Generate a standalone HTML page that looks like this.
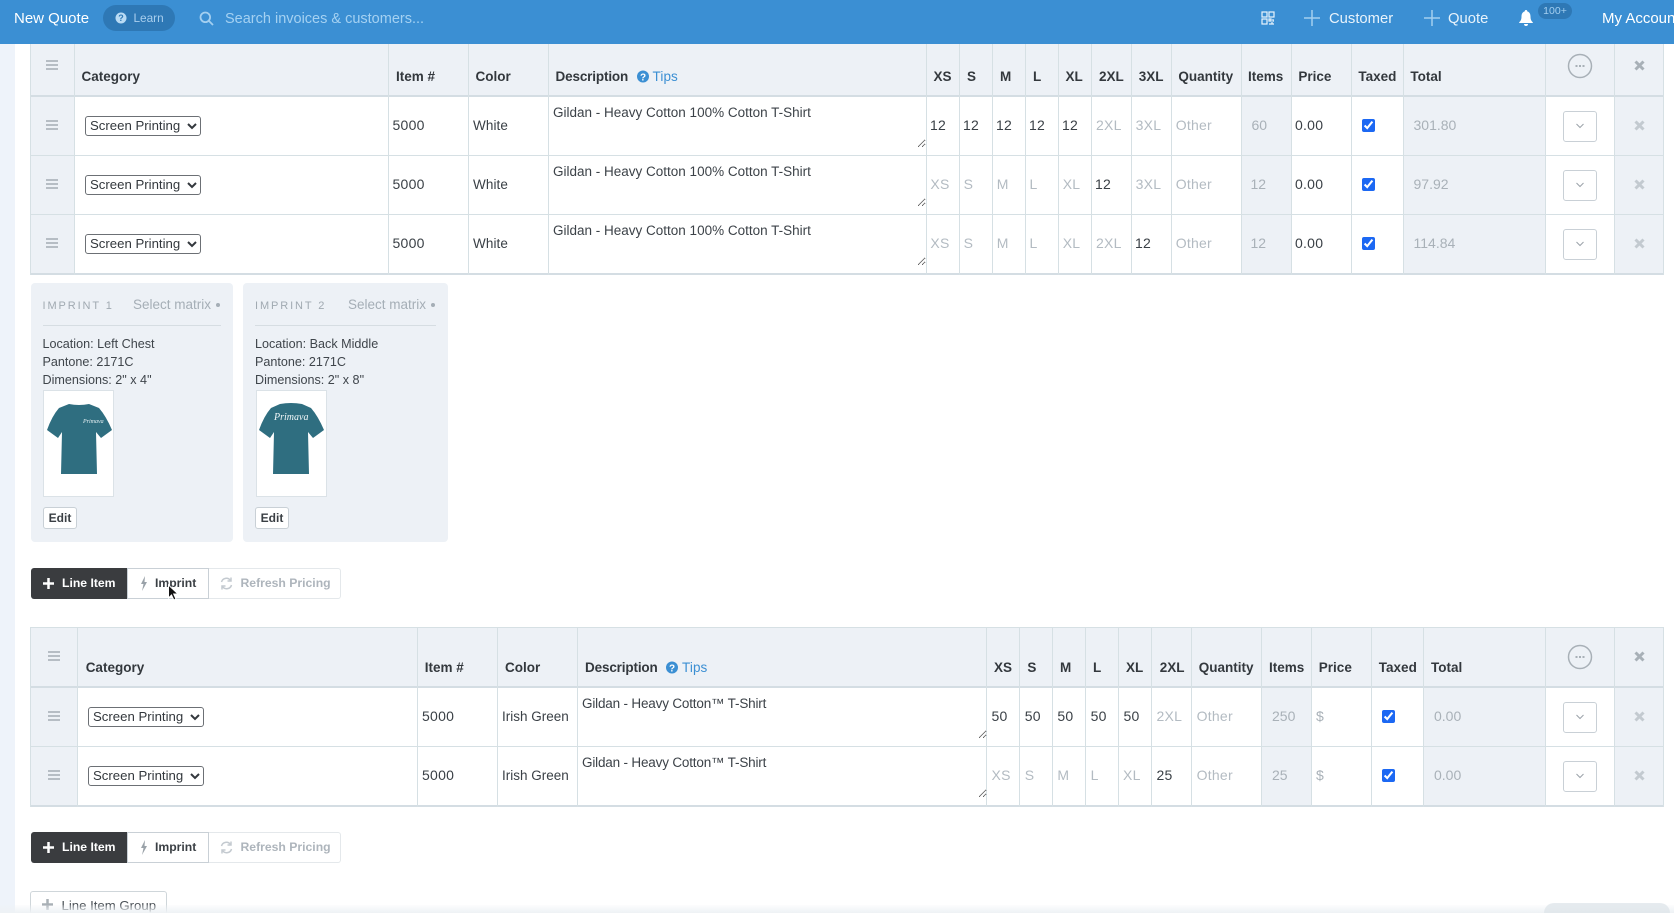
<!DOCTYPE html>
<html lang="en"><head><meta charset="utf-8"><title>New Quote</title>
<style>
html,body{margin:0;padding:0;background:#fff;width:1674px;height:916px;overflow:hidden}
body{position:relative;font-family:"Liberation Sans",sans-serif;color:#3c4248}
.a,.h,.v,.p,.g,.dr,textarea,select,input{position:absolute}
.h,.v,.p,.g{white-space:nowrap;line-height:20px;height:20px}
.h{font-weight:bold;font-size:13.5px;color:#33383d}
.v,.p,.g{font-size:14px;letter-spacing:.25px;color:#3a4046}
.p{color:#b3bbc2}.g{color:#a9b1b8;letter-spacing:0}
.w{font-size:13.5px;letter-spacing:.1px;margin-top:1px}
.ig{font-size:13.5px;letter-spacing:0;margin-top:1px}
.tb{position:absolute;left:30px;width:1634px}
.bg{position:absolute;background:#edf1f6}
.l{position:absolute;top:0;bottom:0;width:1px;background:#d6e0e4}
.hl{position:absolute;left:0;right:0;height:1px;background:#d6e0e4}
.th{position:absolute;left:0;right:0;height:2px;background:#d4dde3}
textarea{border:0;background:transparent;margin:0;padding:6px 4px;font:13.5px/20px "Liberation Sans",sans-serif;color:#3c4248;outline:0;box-sizing:border-box;height:51px;resize:both;overflow:hidden}
textarea.tm{letter-spacing:-.18px}
select{width:116px;height:20px;font:13.2px "Liberation Sans",sans-serif;color:#33383d;background:#fff;border:1px solid #6c7075;border-radius:3px;margin:0;padding:0 0 2px 0}
input{margin:0;width:13px;height:13px;accent-color:#1c68f3}
.dg{position:absolute;width:12px;height:10px;border-top:2px solid #b6bdc4;border-bottom:2px solid #b6bdc4;box-sizing:border-box}
.dg:after{content:"";position:absolute;left:0;right:0;top:2px;height:2px;background:#b6bdc4}
.dr{width:34px;height:31px;box-sizing:border-box;border:1px solid #c9d0d6;border-radius:3px;background:#fff;left:1563px}
.dr svg{position:absolute;left:12px;top:11px}
.card{position:absolute;top:283px;height:259px;background:#edf1f6;border-radius:4px}
.ct{position:absolute;font-size:12.6px;line-height:18px;color:#3f454b;white-space:nowrap}
.im{position:absolute;top:390px;width:71px;height:107px;background:#fff;border:1px solid #dbe2e7;box-sizing:border-box}
.ed{position:absolute;top:507px;width:34px;height:22px;background:#fff;border:1px solid #c9d0d6;border-radius:3px;box-sizing:border-box;font:bold 12px/20px "Liberation Sans",sans-serif;text-align:center;color:#3a3f44}
.bt{position:absolute;left:31px;width:310px;height:31px}
.b1{position:absolute;left:0;top:0;width:96px;height:31px;background:#3a3c3f;border-radius:3px 0 0 3px}
.b2{position:absolute;left:96px;top:0;width:82px;height:31px;background:#fff;border:1px solid #c9d0d6;box-sizing:border-box}
.b3{position:absolute;left:178px;top:0;width:132px;height:31px;background:#fff;border:1px solid #e4e8eb;border-left:0;box-sizing:border-box;border-radius:0 3px 3px 0}
.bl{position:absolute;top:5px;line-height:20px;font-size:12.2px;font-weight:bold;white-space:nowrap}
.tp{font-size:11px;line-height:16px;letter-spacing:1.9px;color:#a0a9b1;white-space:nowrap;top:298px}
.sm{font-size:13.5px;line-height:18px;color:#a5aeb6;white-space:nowrap;top:296px}
.bu{top:303px;width:4px;height:4px;border-radius:2px;background:#a5aeb6}
</style></head><body>

<div class="a" style="left:0;top:44px;width:15px;height:869px;background:#eef3fa"></div>

<!-- top bar -->
<div class="a" style="left:0;top:0;width:1674px;height:44px;background:#3b8fd3;overflow:hidden">
<div class="a" style="left:14px;top:9px;font-size:15px;line-height:20px;color:#fff;white-space:nowrap">New Quote</div>
<div class="a" style="left:103px;top:5px;width:72px;height:26px;background:#2e78b5;border-radius:13px"></div>
<svg class="a" style="left:115px;top:12px" width="12" height="12" viewBox="0 0 12 12"><circle cx="6" cy="6" r="5.5" fill="#b9dbf4"/><text x="6" y="9.2" font-size="9" font-weight="bold" text-anchor="middle" fill="#2e78b5" font-family="Liberation Sans">?</text></svg>
<div class="a" style="left:133.5px;top:8px;font-size:11.8px;line-height:20px;color:#a9cfee;white-space:nowrap">Learn</div>
<svg class="a" style="left:199px;top:11px" width="15" height="15" viewBox="0 0 15 15" fill="none" stroke="#a3cff0" stroke-width="1.8"><circle cx="6.3" cy="6.3" r="4.8"/><path d="M10 10l4 4"/></svg>
<div class="a" style="left:225px;top:9px;font-size:14.5px;line-height:20px;color:#a4d1f2;white-space:nowrap">Search invoices &amp; customers...</div>
<svg class="a" style="left:1261px;top:11px" width="14" height="14" viewBox="0 0 14 14" fill="none" stroke="#eaf4fc" stroke-width="1.2"><rect x="1" y="1" width="5" height="5"/><rect x="8" y="1" width="5" height="5"/><rect x="1" y="8" width="5" height="5"/><path d="M8 8h2v2H8zM12 8v2h1M8 13h5M11 11v2"/></svg>
<svg class="a" style="left:1304px;top:10px" width="16" height="16" viewBox="0 0 16 16" stroke="#a3cff0" stroke-width="1.5"><path d="M8 0v16M0 8h16"/></svg>
<div class="a" style="left:1329px;top:9px;font-size:14.8px;line-height:20px;color:#e8f3fb;white-space:nowrap">Customer</div>
<svg class="a" style="left:1424px;top:10px" width="16" height="16" viewBox="0 0 16 16" stroke="#a3cff0" stroke-width="1.5"><path d="M8 0v16M0 8h16"/></svg>
<div class="a" style="left:1448px;top:9px;font-size:14.8px;line-height:20px;color:#e8f3fb;white-space:nowrap">Quote</div>
<svg class="a" style="left:1519px;top:10px" width="14" height="16" viewBox="0 0 14 16" fill="#fff"><path d="M7 0a1.2 1.2 0 0 1 1.2 1.4C10.5 2 11.5 4 11.5 6.5c0 3 .8 4.5 2.3 5.8V13H.2v-.7C1.7 11 2.5 9.500 2.5 6.500 2.5 4 3.500 2 5.800 1.400A1.200 1.200 0 0 1 7 0zM5 14h4a2 2 0 0 1-4 0z"/></svg>
<div class="a" style="left:1538px;top:3px;width:34px;height:16px;background:#2e78b5;border-radius:8px;font-size:10.5px;line-height:16px;text-align:center;color:#a3cff0">100+</div>
<div class="a" style="left:1602px;top:9px;font-size:15px;line-height:20px;color:#fff;white-space:nowrap">My Account</div>
</div>

<!-- table 1 frame -->
<div class="tb" style="top:44px;height:231px">
<div class="bg" style="left:0;right:0;top:0;height:52px"></div>
<div class="bg" style="left:0;width:44px;top:53px;height:176px"></div>
<div class="bg" style="left:1212px;width:50px;top:53px;height:176px"></div>
<div class="bg" style="left:1373px;width:142px;top:53px;height:176px"></div>
<div class="bg" style="left:1585px;width:49px;top:53px;height:176px"></div>
<div class="th" style="top:51px"></div><div class="hl" style="top:111px"></div><div class="hl" style="top:170px"></div><div class="th" style="top:229px"></div>
<i class="l" style="left:0"></i><i class="l" style="left:44px"></i><i class="l" style="left:358px"></i><i class="l" style="left:438px"></i><i class="l" style="left:518px"></i><i class="l" style="left:896px"></i><i class="l" style="left:929px"></i><i class="l" style="left:962px"></i><i class="l" style="left:995px"></i><i class="l" style="left:1028px"></i><i class="l" style="left:1061px"></i><i class="l" style="left:1101px"></i><i class="l" style="left:1141px"></i><i class="l" style="left:1211px"></i><i class="l" style="left:1261px"></i><i class="l" style="left:1321px"></i><i class="l" style="left:1373px"></i><i class="l" style="left:1515px"></i><i class="l" style="left:1584px"></i><i class="l" style="left:1633px"></i>
</div>

<!-- table 1 header -->
<div class="dg" style="left:46px;top:60px"></div>
<b class="h" style="left:81.5px;top:67px">Category</b><b class="h" style="left:396px;top:67px">Item #</b><b class="h" style="left:475.5px;top:67px">Color</b><b class="h" style="left:555.5px;top:67px;letter-spacing:-.15px">Description</b>
<svg class="a" style="left:637px;top:70px" width="12" height="13" viewBox="0 0 12 13"><circle cx="6" cy="6.5" r="6" fill="#3b8fd3"/><text x="6" y="10.5" font-size="10" font-weight="bold" text-anchor="middle" fill="#fff" font-family="Liberation Sans">?</text></svg>
<div class="v" style="left:652.5px;top:67px;color:#3b8fd3;font-size:13.5px;letter-spacing:.1px">Tips</div>
<b class="h" style="left:933.5px;top:67px">XS</b><b class="h" style="left:967px;top:67px">S</b><b class="h" style="left:1000px;top:67px">M</b><b class="h" style="left:1033px;top:67px">L</b><b class="h" style="left:1065.5px;top:67px">XL</b><b class="h" style="left:1099px;top:67px">2XL</b><b class="h" style="left:1138.8px;top:67px">3XL</b><b class="h" style="left:1178.4px;top:67px">Quantity</b><b class="h" style="left:1248px;top:67px">Items</b><b class="h" style="left:1298.4px;top:67px">Price</b><b class="h" style="left:1358.4px;top:67px">Taxed</b><b class="h" style="left:1410.4px;top:67px">Total</b>
<svg class="a" style="left:1567px;top:53px" width="26" height="26" viewBox="0 0 26 26" fill="none"><circle cx="13" cy="13" r="11.5" stroke="#a8b0b7" stroke-width="1.5"/><path d="M8.5 13h2M12 13h2M15.5 13h2" stroke="#a8b0b7" stroke-width="2"/></svg>
<svg class="a" style="left:1634px;top:60px" width="11" height="11" viewBox="0 0 11 11" stroke="#a8b0b7" stroke-width="3"><path d="M1.5 1.5l8 8M9.5 1.5l-8 8"/></svg>

<!-- table 1 row 1 -->
<div class="dg" style="left:46px;top:120px"></div>
<select style="left:85px;top:116px"><option>Screen Printing</option></select>
<div class="v" style="left:392.5px;top:115px">5000</div><div class="v w" style="left:473px;top:115px">White</div>
<textarea style="left:549px;top:97px;width:377px">Gildan - Heavy Cotton 100% Cotton T-Shirt</textarea>
<div class="v" style="left:930px;top:115px">12</div><div class="v" style="left:963px;top:115px">12</div><div class="v" style="left:996px;top:115px">12</div><div class="v" style="left:1029px;top:115px">12</div><div class="v" style="left:1062px;top:115px">12</div><div class="p" style="left:1096px;top:115px">2XL</div><div class="p" style="left:1135.6px;top:115px">3XL</div><div class="p" style="left:1175.7px;top:115px">Other</div><div class="g" style="left:1251.5px;top:115px">60</div><div class="v" style="left:1295px;top:115px">0.00</div>
<input type="checkbox" checked style="left:1362px;top:119px"><div class="g" style="left:1413.5px;top:115px">301.80</div>
<div class="dr" style="top:111px"><svg width="8" height="6" viewBox="0 0 8 6" fill="none" stroke="#9aa2a9"><path d="M.5 1l3.5 3.5L7.5 1"/></svg></div>
<svg class="a" style="left:1634px;top:120px" width="11" height="11" viewBox="0 0 11 11" stroke="#c3cad0" stroke-width="3"><path d="M1.5 1.5l8 8M9.5 1.5l-8 8"/></svg>

<!-- table 1 row 2 -->
<div class="dg" style="left:46px;top:179px"></div>
<select style="left:85px;top:175px"><option>Screen Printing</option></select>
<div class="v" style="left:392.5px;top:174px">5000</div><div class="v w" style="left:473px;top:174px">White</div>
<textarea style="left:549px;top:156px;width:377px">Gildan - Heavy Cotton 100% Cotton T-Shirt</textarea>
<div class="p" style="left:930.4px;top:174px">XS</div><div class="p" style="left:963.6px;top:174px">S</div><div class="p" style="left:996.8px;top:174px">M</div><div class="p" style="left:1029.5px;top:174px">L</div><div class="p" style="left:1062.7px;top:174px">XL</div><div class="v" style="left:1095px;top:174px">12</div><div class="p" style="left:1135.6px;top:174px">3XL</div><div class="p" style="left:1175.7px;top:174px">Other</div><div class="g" style="left:1250.5px;top:174px">12</div><div class="v" style="left:1295px;top:174px">0.00</div>
<input type="checkbox" checked style="left:1362px;top:178px"><div class="g" style="left:1413.5px;top:174px">97.92</div>
<div class="dr" style="top:170px"><svg width="8" height="6" viewBox="0 0 8 6" fill="none" stroke="#9aa2a9"><path d="M.5 1l3.5 3.5L7.5 1"/></svg></div>
<svg class="a" style="left:1634px;top:179px" width="11" height="11" viewBox="0 0 11 11" stroke="#c3cad0" stroke-width="3"><path d="M1.5 1.5l8 8M9.5 1.5l-8 8"/></svg>

<!-- table 1 row 3 -->
<div class="dg" style="left:46px;top:238px"></div>
<select style="left:85px;top:234px"><option>Screen Printing</option></select>
<div class="v" style="left:392.5px;top:233px">5000</div><div class="v w" style="left:473px;top:233px">White</div>
<textarea style="left:549px;top:215px;width:377px">Gildan - Heavy Cotton 100% Cotton T-Shirt</textarea>
<div class="p" style="left:930.4px;top:233px">XS</div><div class="p" style="left:963.6px;top:233px">S</div><div class="p" style="left:996.8px;top:233px">M</div><div class="p" style="left:1029.5px;top:233px">L</div><div class="p" style="left:1062.7px;top:233px">XL</div><div class="p" style="left:1096px;top:233px">2XL</div><div class="v" style="left:1135px;top:233px">12</div><div class="p" style="left:1175.7px;top:233px">Other</div><div class="g" style="left:1250.5px;top:233px">12</div><div class="v" style="left:1295px;top:233px">0.00</div>
<input type="checkbox" checked style="left:1362px;top:237px"><div class="g" style="left:1413.5px;top:233px">114.84</div>
<div class="dr" style="top:229px"><svg width="8" height="6" viewBox="0 0 8 6" fill="none" stroke="#9aa2a9"><path d="M.5 1l3.5 3.5L7.5 1"/></svg></div>
<svg class="a" style="left:1634px;top:238px" width="11" height="11" viewBox="0 0 11 11" stroke="#c3cad0" stroke-width="3"><path d="M1.5 1.5l8 8M9.5 1.5l-8 8"/></svg>

<!-- imprint cards -->
<div class="card" style="left:31px;width:202px"></div>
<div class="card" style="left:243px;width:205px"></div>
<div class="a tp" style="left:42.5px">IMPRINT 1</div>
<div class="a sm" style="left:133px">Select matrix</div>
<div class="a bu" style="left:216px"></div>
<div class="a" style="left:43px;top:325px;width:178px;height:1px;background:#d6dde2"></div>
<div class="ct" style="left:42.5px;top:335px">Location: Left Chest<br>Pantone: 2171C<br>Dimensions: 2" x 4"</div>
<div class="im" style="left:43px"></div>
<svg class="a" style="left:46.5px;top:403px" width="65" height="72" viewBox="0 0 65 72"><path d="M22 1Q32 3 42 1L52 5Q59 13 65 27L54 35L49 29L50 71L14 71L15 29L11 35L0 27Q5 13 12 5Z" fill="#2f6e80"/><text x="36" y="20" font-size="6" font-style="italic" fill="#e8f2f4" font-family="Liberation Serif">Primava</text></svg>
<div class="ed" style="left:43px">Edit</div>

<div class="a tp" style="left:255px">IMPRINT 2</div>
<div class="a sm" style="left:348px">Select matrix</div>
<div class="a bu" style="left:431px"></div>
<div class="a" style="left:255px;top:325px;width:181px;height:1px;background:#d6dde2"></div>
<div class="ct" style="left:255px;top:335px">Location: Back Middle<br>Pantone: 2171C<br>Dimensions: 2" x 8"</div>
<div class="im" style="left:255.5px"></div>
<svg class="a" style="left:259px;top:403px" width="65" height="72" viewBox="0 0 65 72"><path d="M21 1Q32 -1 43 1L52 5Q59 13 65 27L54 35L49 29L50 71L14 71L15 29L11 35L0 27Q5 13 12 5Z" fill="#2f6e80"/><text x="15" y="17" font-size="10" font-style="italic" fill="#f0f6f7" font-family="Liberation Serif">Primava</text></svg>
<div class="ed" style="left:255px">Edit</div>

<!-- buttons 1 -->
<div class="bt" style="top:568px">
<div class="b1"></div><div class="b2"></div><div class="b3"></div>
<svg class="a" style="left:12px;top:10px" width="11" height="11" viewBox="0 0 11 11" stroke="#fff" stroke-width="2.5"><path d="M5.5 0v11M0 5.5h11"/></svg>
<div class="bl" style="left:31px;color:#fff">Line Item</div>
<svg class="a" style="left:109px;top:8px" width="8" height="15" viewBox="0 0 8 15" fill="#9aa2a9"><path d="M5 0L1 8h2.5L2 15l5-9H4.5z"/></svg>
<div class="bl" style="left:124px;color:#3a3f44">Imprint</div>
<svg class="a" style="left:189px;top:9px" width="13" height="13" viewBox="0 0 13 13" fill="none" stroke="#c4cad0" stroke-width="1.5"><path d="M1.5 5A5 5 0 0 1 10.5 3.5M11.5 8A5 5 0 0 1 2.5 9.500"/><path d="M11 .5V4H7.500M2 12.500V9h3.500"/></svg>
<div class="bl" style="left:209.5px;color:#aeb5bc">Refresh Pricing</div>
</div>
<svg class="a" style="left:167px;top:584px;z-index:3" width="13" height="18" viewBox="0 0 13 18"><path d="M1.5 1v13l3-3 2.300 5 2.200-1-2.300-5H11z" fill="#111" stroke="#fff" stroke-width="1"/></svg>

<!-- table 2 frame -->
<div class="tb" style="top:627px;height:180px">
<div class="bg" style="left:0;right:0;top:0;height:60px"></div>
<div class="bg" style="left:0;width:47px;top:61px;height:117px"></div>
<div class="bg" style="left:1232px;width:50px;top:61px;height:117px"></div>
<div class="bg" style="left:1393px;width:122px;top:61px;height:117px"></div>
<div class="bg" style="left:1585px;width:49px;top:61px;height:117px"></div>
<div class="hl" style="top:0"></div><div class="th" style="top:59px"></div><div class="hl" style="top:119px"></div><div class="th" style="top:178px"></div>
<i class="l" style="left:0"></i><i class="l" style="left:47px"></i><i class="l" style="left:387px"></i><i class="l" style="left:467px"></i><i class="l" style="left:547px"></i><i class="l" style="left:956px"></i><i class="l" style="left:989px"></i><i class="l" style="left:1022px"></i><i class="l" style="left:1055px"></i><i class="l" style="left:1088px"></i><i class="l" style="left:1121px"></i><i class="l" style="left:1161px"></i><i class="l" style="left:1231px"></i><i class="l" style="left:1281px"></i><i class="l" style="left:1341px"></i><i class="l" style="left:1393px"></i><i class="l" style="left:1515px"></i><i class="l" style="left:1584px"></i><i class="l" style="left:1633px"></i>
</div>

<!-- table 2 header -->
<div class="dg" style="left:48px;top:651px"></div>
<b class="h" style="left:85.7px;top:658px">Category</b><b class="h" style="left:424.8px;top:658px">Item #</b><b class="h" style="left:505px;top:658px">Color</b><b class="h" style="left:585px;top:658px;letter-spacing:-.15px">Description</b>
<svg class="a" style="left:666px;top:661px" width="12" height="13" viewBox="0 0 12 13"><circle cx="6" cy="6.5" r="6" fill="#3b8fd3"/><text x="6" y="10.5" font-size="10" font-weight="bold" text-anchor="middle" fill="#fff" font-family="Liberation Sans">?</text></svg>
<div class="v" style="left:682px;top:658px;color:#3b8fd3;font-size:13.5px;letter-spacing:.1px">Tips</div>
<b class="h" style="left:994px;top:658px">XS</b><b class="h" style="left:1027.4px;top:658px">S</b><b class="h" style="left:1060px;top:658px">M</b><b class="h" style="left:1093px;top:658px">L</b><b class="h" style="left:1126px;top:658px">XL</b><b class="h" style="left:1159.7px;top:658px">2XL</b><b class="h" style="left:1198.8px;top:658px">Quantity</b><b class="h" style="left:1269px;top:658px">Items</b><b class="h" style="left:1318.8px;top:658px">Price</b><b class="h" style="left:1378.8px;top:658px">Taxed</b><b class="h" style="left:1431px;top:658px">Total</b>
<svg class="a" style="left:1567px;top:644px" width="26" height="26" viewBox="0 0 26 26" fill="none"><circle cx="13" cy="13" r="11.5" stroke="#a8b0b7" stroke-width="1.5"/><path d="M8.5 13h2M12 13h2M15.5 13h2" stroke="#a8b0b7" stroke-width="2"/></svg>
<svg class="a" style="left:1634px;top:651px" width="11" height="11" viewBox="0 0 11 11" stroke="#a8b0b7" stroke-width="3"><path d="M1.5 1.5l8 8M9.5 1.5l-8 8"/></svg>

<!-- table 2 row 1 -->
<div class="dg" style="left:48px;top:711px"></div>
<select style="left:88px;top:707px"><option>Screen Printing</option></select>
<div class="v" style="left:422px;top:706px">5000</div><div class="v ig" style="left:502px;top:706px">Irish Green</div>
<textarea class="tm" style="left:578px;top:688px;width:409px">Gildan - Heavy Cotton™ T-Shirt</textarea>
<div class="v" style="left:991.5px;top:706px">50</div><div class="v" style="left:1024.7px;top:706px">50</div><div class="v" style="left:1057.4px;top:706px">50</div><div class="v" style="left:1090.6px;top:706px">50</div><div class="v" style="left:1123.5px;top:706px">50</div><div class="p" style="left:1156.5px;top:706px">2XL</div><div class="p" style="left:1196.6px;top:706px">Other</div><div class="g" style="left:1272px;top:706px">250</div><div class="g" style="left:1316px;top:706px">$</div>
<input type="checkbox" checked style="left:1382px;top:710px"><div class="g" style="left:1434px;top:706px">0.00</div>
<div class="dr" style="top:702px"><svg width="8" height="6" viewBox="0 0 8 6" fill="none" stroke="#9aa2a9"><path d="M.5 1l3.5 3.5L7.5 1"/></svg></div>
<svg class="a" style="left:1634px;top:711px" width="11" height="11" viewBox="0 0 11 11" stroke="#c3cad0" stroke-width="3"><path d="M1.5 1.5l8 8M9.5 1.5l-8 8"/></svg>

<!-- table 2 row 2 -->
<div class="dg" style="left:48px;top:770px"></div>
<select style="left:88px;top:766px"><option>Screen Printing</option></select>
<div class="v" style="left:422px;top:765px">5000</div><div class="v ig" style="left:502px;top:765px">Irish Green</div>
<textarea class="tm" style="left:578px;top:747px;width:409px">Gildan - Heavy Cotton™ T-Shirt</textarea>
<div class="p" style="left:991.5px;top:765px">XS</div><div class="p" style="left:1024.7px;top:765px">S</div><div class="p" style="left:1057.4px;top:765px">M</div><div class="p" style="left:1090.6px;top:765px">L</div><div class="p" style="left:1123px;top:765px">XL</div><div class="v" style="left:1156.5px;top:765px">25</div><div class="p" style="left:1196.6px;top:765px">Other</div><div class="g" style="left:1272px;top:765px">25</div><div class="g" style="left:1316px;top:765px">$</div>
<input type="checkbox" checked style="left:1382px;top:769px"><div class="g" style="left:1434px;top:765px">0.00</div>
<div class="dr" style="top:761px"><svg width="8" height="6" viewBox="0 0 8 6" fill="none" stroke="#9aa2a9"><path d="M.5 1l3.5 3.5L7.5 1"/></svg></div>
<svg class="a" style="left:1634px;top:770px" width="11" height="11" viewBox="0 0 11 11" stroke="#c3cad0" stroke-width="3"><path d="M1.5 1.5l8 8M9.5 1.5l-8 8"/></svg>

<!-- buttons 2 -->
<div class="bt" style="top:832px">
<div class="b1"></div><div class="b2"></div><div class="b3"></div>
<svg class="a" style="left:12px;top:10px" width="11" height="11" viewBox="0 0 11 11" stroke="#fff" stroke-width="2.5"><path d="M5.5 0v11M0 5.5h11"/></svg>
<div class="bl" style="left:31px;color:#fff">Line Item</div>
<svg class="a" style="left:109px;top:8px" width="8" height="15" viewBox="0 0 8 15" fill="#9aa2a9"><path d="M5 0L1 8h2.5L2 15l5-9H4.5z"/></svg>
<div class="bl" style="left:124px;color:#3a3f44">Imprint</div>
<svg class="a" style="left:189px;top:9px" width="13" height="13" viewBox="0 0 13 13" fill="none" stroke="#c4cad0" stroke-width="1.5"><path d="M1.5 5A5 5 0 0 1 10.5 3.5M11.5 8A5 5 0 0 1 2.5 9.500"/><path d="M11 .5V4H7.500M2 12.500V9h3.500"/></svg>
<div class="bl" style="left:209.5px;color:#aeb5bc">Refresh Pricing</div>
</div>

<!-- line item group -->
<div class="a" style="left:30px;top:891px;width:137px;height:30px;box-sizing:border-box;border:1px solid #cfd6da;border-radius:3px;background:#fff"></div>
<svg class="a" style="left:42px;top:899px" width="11" height="11" viewBox="0 0 11 11" stroke="#a9b0b6" stroke-width="2.5"><path d="M5.5 0v11M0 5.5h11"/></svg>
<div class="a" style="left:61.5px;top:896px;font-size:13.2px;line-height:20px;color:#4a5056;white-space:nowrap">Line Item Group</div>

<!-- bottom fade -->
<div class="a" style="left:0;top:905px;width:1674px;height:8px;background:linear-gradient(to bottom,rgba(238,242,245,.15),#eef2f5)"></div>
<div class="a" style="left:1544px;top:903px;width:126px;height:10px;background:linear-gradient(to bottom,#e6ebef,#e2e8ec);border-radius:14px 14px 0 0"></div>
<div class="a" style="left:0;top:913px;width:1674px;height:3px;background:#fff"></div>
</body></html>
